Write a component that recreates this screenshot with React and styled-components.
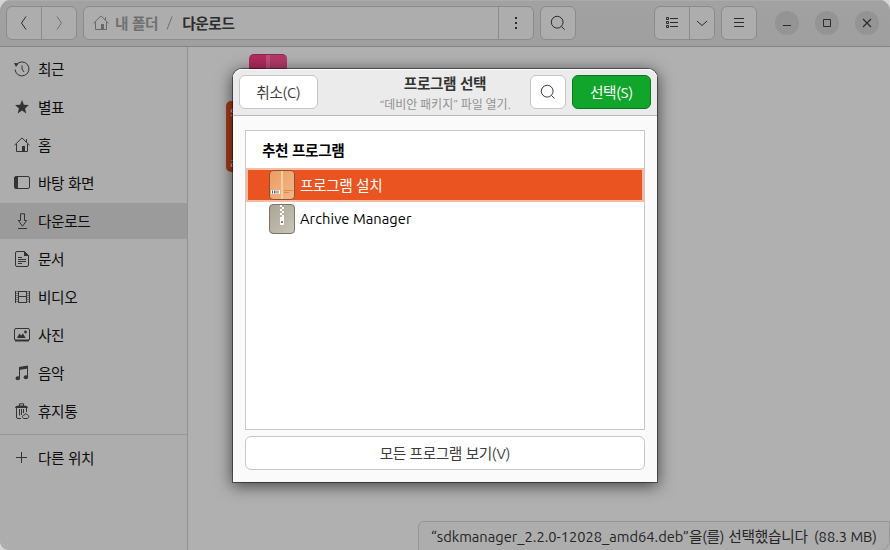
import React from 'react';
import styled, { createGlobalStyle, css } from 'styled-components';

const GlobalStyle = createGlobalStyle`
  * { box-sizing: border-box; }
  body {
    margin: 0;
    overflow: hidden;
    background: #d6d6d6;
    font-family: Ubuntu, "Noto Sans", "Noto Sans CJK KR", sans-serif;
    font-size: 14.667px;
    letter-spacing: -0.4px;
    word-spacing: 0.8px;
    color: #111;
  }
  button { font: inherit; color: inherit; letter-spacing: inherit; word-spacing: inherit; padding: 0; margin: 0; }
  svg { display: block; flex: none; }
`;

const Window = styled.div`
  position: relative;
  width: 890px;
  height: 550px;
  display: flex;
  flex-direction: column;
  overflow: hidden;
  border-radius: 11px 11px 0 9px;
  background: #b0b0b0;
`;

const HeaderBar = styled.header`
  height: 47px;
  flex: none;
  display: flex;
  align-items: flex-start;
  padding: 6px 11px 0 6px;
  background: linear-gradient(#a2a2a2, #9f9f9f);
  border-bottom: 1px solid #858585;
  box-shadow: inset 0 1px #ababab;
  color: #2b2b2b;
`;

const Linked = styled.div`
  display: flex;
  height: 34px;
  width: ${(p) => p.$width}px;
  margin-right: ${(p) => p.$after || 0}px;
  border: 1px solid #8b8b8b;
  border-radius: 6px;
  background: #adadad;
`;

const Segment = styled.button`
  width: ${(p) => p.$width}px;
  display: flex;
  align-items: center;
  justify-content: center;
  border: 0;
  background: none;
  color: ${(p) => (p.$dim ? '#707070' : '#2b2b2b')};
  & + & { border-left: 1px solid #8b8b8b; }
`;

const PathBar = styled.nav`
  flex: 1;
  display: flex;
  align-items: center;
  padding-left: 9px;
  border-right: 1px solid #8b8b8b;
  color: #686868;
`;

const Crumb = styled.span`
  margin-left: ${(p) => p.$gap}px;
  padding-top: 2px;
  line-height: 20px;
  font-weight: 700;
  color: ${(p) => (p.$current ? '#2c2c2c' : '#707070')};
`;

const WindowButtons = styled.div`
  height: 34px;
  margin-left: auto;
  display: flex;
  align-items: center;
  gap: 16px;
`;

const CircleButton = styled.button`
  width: 24px;
  height: 24px;
  border: 0;
  border-radius: 50%;
  background: #949494;
  display: grid;
  place-items: center;
`;

const Body = styled.div`
  flex: 1;
  display: flex;
  min-height: 0;
`;

const Sidebar = styled.aside`
  width: 188px;
  flex: none;
  padding-top: 4px;
  background: #adadad;
  border-right: 1px solid #939393;
`;

const Places = styled.ul`
  list-style: none;
  margin: 0;
  padding: 0;
  display: flex;
  flex-direction: column;
  gap: 2px;
`;

const Place = styled.li`
  height: 36px;
  display: flex;
  align-items: center;
  gap: 8px;
  padding-left: 14px;
  line-height: 20px;
  color: #0c0c0c;
  background: ${(p) => (p.$selected ? '#9b9b9b' : 'transparent')};
  svg { color: #333; }
`;

const Label = styled.span`
  padding-top: 2px;
`;

const Separator = styled.hr`
  height: 1px;
  margin: 5px 0;
  border: 0;
  background: #989898;
`;

const Files = styled.main`
  flex: 1;
  position: relative;
`;

const PackageFile = styled.div`
  position: absolute;
  left: 61px;
  top: 7px;
  width: 38px;
  height: 46px;
  border-radius: 5px;
  background: linear-gradient(90deg, #b02c5f 0 17px, #bd5078 17px 21px, #b23a68 21px);
  border-top: 1px solid #8d2750;
`;

const FileLabel = styled.div`
  position: absolute;
  left: 38px;
  top: 54px;
  width: 84px;
  height: 71px;
  padding: 1px 4px;
  border-radius: 5px;
  background: #a33c18;
  color: #cfc2bd;
  font-size: 13px;
  line-height: 18px;
  display: flex;
  flex-direction: column;
  justify-content: space-between;
`;

const StatusBar = styled.footer`
  position: absolute;
  left: 418px;
  top: 521px;
  width: 472px;
  height: 30px;
  padding: 5px 0 0 12px;
  border: 1px solid #959595;
  border-radius: 6px 0 10px 0;
  background: #adadad;
  color: #252525;
  line-height: 20px;
  letter-spacing: -0.22px;
  white-space: nowrap;
  display: flex;
`;

const StatusText = styled.span`
  width: 383px;
`;

const Latin = styled.span`
  letter-spacing: ${(p) => p.$spacing || 0}px;
  word-spacing: 0;
`;

const Dialog = styled.section`
  position: absolute;
  left: 233px;
  top: 69px;
  width: 424px;
  height: 413px;
  display: flex;
  flex-direction: column;
  background: #fafafa;
  border-radius: 9px 9px 0 0;
  box-shadow: 0 0 0 1px rgba(0, 0, 0, 0.45), 0 3px 16px 1px rgba(0, 0, 0, 0.6);
`;

const DialogHeader = styled.div`
  height: 47px;
  flex: none;
  display: flex;
  gap: 6px;
  padding: 6px 6px 0;
  border-radius: 9px 9px 0 0;
  background: #ebebeb;
  border-bottom: 1px solid #b9b9b9;
  box-shadow: inset 0 1px #fff;
`;

const Button = styled.button`
  height: 34px;
  flex: none;
  width: ${(p) => p.$width}px;
  display: flex;
  align-items: center;
  justify-content: center;
  border: 1px solid #c7c7c7;
  border-radius: 6px;
  background: #fff;
  color: #3d3d3d;
  line-height: 20px;
  ${(p) => p.$suggested && css`
    background: #12a52b;
    border-color: #0b761d;
    color: #fff;
  `}
`;

const Titles = styled.div`
  flex: 1;
  padding-left: 42px;
  text-align: center;
  white-space: nowrap;
`;

const Title = styled.div`
  font-weight: 700;
  line-height: 20px;
  margin-top: -1px;
  color: #333;
`;

const Subtitle = styled.div`
  font-size: 12px;
  letter-spacing: 0;
  word-spacing: 0;
  line-height: 18px;
  margin-top: 2px;
  color: #929292;
`;

const DialogBody = styled.div`
  flex: 1;
  display: flex;
  flex-direction: column;
  gap: 6px;
  padding: 14px 12px 12px;
`;

const AppList = styled.div`
  height: 300px;
  border: 1px solid #c7c7c7;
  background: #fff;
`;

const ListHeading = styled.div`
  height: 37px;
  padding: 10px 0 0 16px;
  font-weight: 700;
  line-height: 20px;
  color: #000;
`;

const AppRow = styled.div`
  height: 34px;
  display: flex;
  align-items: center;
  gap: 5px;
  padding-left: ${(p) => (p.$selected ? 21 : 23)}px;
  line-height: 20px;
  color: ${(p) => (p.$selected ? '#fff' : '#000')};
  background: ${(p) => (p.$selected ? '#e95420' : 'transparent')};
  border: ${(p) => (p.$selected ? '2px solid #f7bba6' : '0')};
`;

const Icon = ({ size = 16, children }) => (
  <svg width={size} height={size} viewBox="0 0 16 16" fill="none" stroke="currentColor">{children}</svg>
);

const Search = () => <Icon><circle cx="7.2" cy="7.2" r="5.9" /><path d="M11.4 11.4l3.2 3.2" /></Icon>;
const Home = () => (
  <Icon><path d="M.5 8.2 8 .9l7.5 7.3M2.5 7v7.5h11V7M12.5 2.2v3" /><path d="M8 9h3v5.5H8z" fill="currentColor" stroke="none" /></Icon>
);

const icons = {
  recent: <Icon><path d="M2.1 4.1A7 7 0 1 1 1 8.5M8 4.5V8l2 3" /><path d="M0 2l4.7.2L2 6z" fill="currentColor" stroke="none" /></Icon>,
  star: <Icon><path d="M8 1l1.9 4.700 5 .4-3.800 3.300 1.200 5L8 11.600l-4.300 2.800 1.200-5L1.100 6.100l5-.4z" fill="currentColor" stroke="none" /></Icon>,
  home: <Home />,
  desktop: <Icon><rect x=".5" y="1.500" width="15" height="12" rx="1.500" /><path d="M.5 3A1.500 1.500 0 0 1 2 1.500h2v12H2A1.500 1.500 0 0 1 .5 12z" fill="currentColor" stroke="none" /></Icon>,
  download: <Icon><path d="M6.500.8h4v6.700h2.200L8.500 13.200 4.300 7.500h2.200zM4 15.500h9" /></Icon>,
  document: <Icon><path d="M3 .5h7.500l4 4V14a1.500 1.500 0 0 1-1.500 1.500H3A1.500 1.500 0 0 1 1.500 14V2A1.500 1.500 0 0 1 3 .5zM4 6.500h4M4 8.500h8M4 10.500h8M4 12.500h4" /><path d="M10 0v5h5z" fill="currentColor" stroke="none" /></Icon>,
  video: <Icon><path d="M4.500 2v12M12.500 2v12M4.500 2.500h8M4.500 7.500h8M4.500 13.500h8" /><path d="M3 2v12M14 2v12" strokeDasharray="1 1" /><path d="M1.500 2v12M15.500 2v12" /></Icon>,
  pictures: <Icon><rect x=".5" y="1.500" width="15" height="12" rx="1.500" /><path d="M1 13.500h14" strokeWidth="2" /><path d="M3 11l2.300-4.500L7 8.400l2-2 2.700 4.600z" fill="currentColor" stroke="none" /><circle cx="11.500" cy="5" r="1.400" fill="currentColor" stroke="none" /></Icon>,
  music: <Icon><path d="M5.500 13.500V3l8-1.500v11" /><path d="M5 2l9-1.500v3L5 5z" fill="currentColor" stroke="none" /><ellipse cx="3.800" cy="13.200" rx="2.200" ry="2" fill="currentColor" stroke="none" /><ellipse cx="11.900" cy="12.200" rx="2.200" ry="2" fill="currentColor" stroke="none" /></Icon>,
  trash: <Icon><path d="M1 5C1.500 2.500 4 2.500 7.500 2.500S13.500 2.500 14 5z" fill="currentColor" stroke="none" /><path d="M5.500 3V.8h4V3M2.500 5v9a1.500 1.500 0 0 0 1.500 1.500h3M5.500 6v6.500M7.500 6v6M9.500 6v4M12.500 5v4" /><path d="M12 10.500l1.500 1.500c2 .5 1.500 3.300-.5 3.500h-3c-2.300-.4-2-3 0-3.400z" /></Icon>,
  plus: <Icon><path d="M7.500 2v11M2 7.500h11" /></Icon>,
};

const places = [
  ['recent', '최근'],
  ['star', '별표'],
  ['home', '홈'],
  ['desktop', '바탕 화면'],
  ['download', '다운로드'],
  ['document', '문서'],
  ['video', '비디오'],
  ['pictures', '사진'],
  ['music', '음악'],
  ['trash', '휴지통'],
];

const PackageIcon = () => (
  <svg width="26" height="30" viewBox="0 0 26 30">
    <defs>
      <linearGradient id="box" x2="1" y2="1"><stop stopColor="#ec9d60" /><stop offset="1" stopColor="#f0b78d" /></linearGradient>
    </defs>
    <rect x=".5" y=".5" width="25" height="29" rx="3.500" fill="url(#box)" stroke="#8d502d" />
    <path d="M12 1h2v28h-2z" fill="#f5cd9a" />
    <path d="M2 20h9v4H2z" fill="#fff" />
    <path d="M3.500 20.500v3M5.500 20.500v3M7 20.500v3M9 20.500v3" stroke="#333" strokeWidth=".8" />
    <path d="M15 20.500h9M15 22.500h5" stroke="#e78745" />
  </svg>
);

const ArchiveIcon = () => (
  <svg width="26" height="30" viewBox="0 0 26 30">
    <defs>
      <linearGradient id="zip" x2="1" y2="1"><stop stopColor="#a9a492" /><stop offset="1" stopColor="#c9c5b8" /></linearGradient>
    </defs>
    <rect x=".5" y=".5" width="25" height="29" rx="3.500" fill="url(#zip)" stroke="#79776c" />
    <path d="M12 1v12" stroke="#fff" strokeWidth="2" strokeDasharray="2 2" />
    <path d="M14 3v10" stroke="#fff" strokeWidth="2" strokeDasharray="2 2" />
    <path d="M11 13h4v7a1 1 0 0 1-1 1h-2a1 1 0 0 1-1-1z" fill="#fff" />
    <path d="M12 17h2v2h-2z" fill="#858276" />
  </svg>
);

export default function App() {
  return (
    <>
      <GlobalStyle />
      <Window>
        <HeaderBar>
          <Linked $width={71} $after={6}>
            <Segment $width={34} aria-label="뒤로"><Icon><path d="M10 1.500 5.500 8l4.500 6.500" /></Icon></Segment>
            <Segment $width={35} $dim aria-label="앞으로"><Icon><path d="M6 1.500 10.500 8 6 14.500" /></Icon></Segment>
          </Linked>
          <Linked $width={451} $after={6}>
            <PathBar>
              <Home />
              <Crumb $gap={6}>내 폴더</Crumb>
              <Crumb $gap={8}><Icon><path d="M1 13.500 6 .5" /></Icon></Crumb>
              <Crumb $gap={0} $current>다운로드</Crumb>
            </PathBar>
            <Segment $width={34} aria-label="메뉴"><Icon><path d="M7 2h2v2H7zM7 7h2v2H7zM7 12h2v2H7z" fill="currentColor" stroke="none" /></Icon></Segment>
          </Linked>
          <Linked $width={36} $after={78}><Segment $width={34} aria-label="검색"><Search /></Segment></Linked>
          <Linked $width={61} $after={6}>
            <Segment $width={34} aria-label="목록">
              <Icon><path d="M2.500 2.500h2v2h-2zM2.500 6.500h2v2h-2zM2.500 10.500h2v2h-2zM6 3.500h8M6 7.500h8M6 11.500h8" /></Icon>
            </Segment>
            <Segment $width={25} aria-label="보기 옵션"><Icon><path d="M3 6l5 4.500L13 6" /></Icon></Segment>
          </Linked>
          <Linked $width={36}><Segment $width={34} aria-label="주 메뉴"><Icon><path d="M3 3.500h10M3 7.500h10M3 11.500h10" /></Icon></Segment></Linked>
          <WindowButtons>
            <CircleButton aria-label="최소화"><Icon><path d="M4 10.500h8" /></Icon></CircleButton>
            <CircleButton aria-label="최대화"><Icon><path d="M4.500 4.500h7v7h-7z" /></Icon></CircleButton>
            <CircleButton aria-label="닫기"><Icon><path d="M4 4l8 8M12 4l-8 8" strokeWidth="1.200" /></Icon></CircleButton>
          </WindowButtons>
        </HeaderBar>
        <Body>
          <Sidebar>
            <Places>
              {places.map(([icon, label]) => (
                <Place key={icon} $selected={icon === 'download'}>{icons[icon]}<Label>{label}</Label></Place>
              ))}
            </Places>
            <Separator />
            <Places><Place>{icons.plus}<Label>다른 위치</Label></Place></Places>
          </Sidebar>
          <Files>
            <PackageFile />
            <FileLabel><span>s</span><span>a</span></FileLabel>
          </Files>
        </Body>
        <StatusBar>
          <StatusText><Latin>“sdkmanager_2.2.0-12028_amd64.deb”</Latin>을(를) 선택했습니다</StatusText>
          <Latin>(88.3 MB)</Latin>
        </StatusBar>
        <Dialog role="dialog">
          <DialogHeader>
            <Button $width={79}><Label>취소<Latin>(C)</Latin></Label></Button>
            <Titles>
              <Title>프로그램 선택</Title>
              <Subtitle>“데비안 패키지” 파일 열기.</Subtitle>
            </Titles>
            <Button $width={36} aria-label="검색"><Search /></Button>
            <Button $width={79} $suggested><Label>선택<Latin>(S)</Latin></Label></Button>
          </DialogHeader>
          <DialogBody>
            <AppList>
              <ListHeading>추천 프로그램</ListHeading>
              <AppRow $selected><PackageIcon /><Label>프로그램 설치</Label></AppRow>
              <AppRow><ArchiveIcon /><Latin $spacing={0.07}>Archive Manager</Latin></AppRow>
            </AppList>
            <Button $width={400}><Label>모든 프로그램 보기<Latin>(V)</Latin></Label></Button>
          </DialogBody>
        </Dialog>
      </Window>
    </>
  );
}
